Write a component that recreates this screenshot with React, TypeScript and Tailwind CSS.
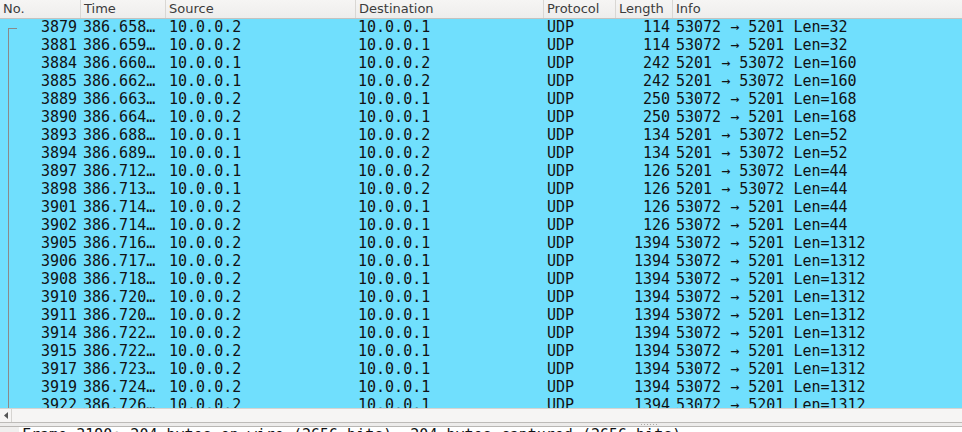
import React from "react";

type Row = {
  no: string;
  time: string;
  src: string;
  dst: string;
  len: string;
  info: string;
};

const UP = "53072 → 5201";
const DOWN = "5201 → 53072";

const rows: Row[] = [
  { no: "3879", time: "386.658…", src: "10.0.0.2", dst: "10.0.0.1", len: "114", info: `${UP} Len=32` },
  { no: "3881", time: "386.659…", src: "10.0.0.2", dst: "10.0.0.1", len: "114", info: `${UP} Len=32` },
  { no: "3884", time: "386.660…", src: "10.0.0.1", dst: "10.0.0.2", len: "242", info: `${DOWN} Len=160` },
  { no: "3885", time: "386.662…", src: "10.0.0.1", dst: "10.0.0.2", len: "242", info: `${DOWN} Len=160` },
  { no: "3889", time: "386.663…", src: "10.0.0.2", dst: "10.0.0.1", len: "250", info: `${UP} Len=168` },
  { no: "3890", time: "386.664…", src: "10.0.0.2", dst: "10.0.0.1", len: "250", info: `${UP} Len=168` },
  { no: "3893", time: "386.688…", src: "10.0.0.1", dst: "10.0.0.2", len: "134", info: `${DOWN} Len=52` },
  { no: "3894", time: "386.689…", src: "10.0.0.1", dst: "10.0.0.2", len: "134", info: `${DOWN} Len=52` },
  { no: "3897", time: "386.712…", src: "10.0.0.1", dst: "10.0.0.2", len: "126", info: `${DOWN} Len=44` },
  { no: "3898", time: "386.713…", src: "10.0.0.1", dst: "10.0.0.2", len: "126", info: `${DOWN} Len=44` },
  { no: "3901", time: "386.714…", src: "10.0.0.2", dst: "10.0.0.1", len: "126", info: `${UP} Len=44` },
  { no: "3902", time: "386.714…", src: "10.0.0.2", dst: "10.0.0.1", len: "126", info: `${UP} Len=44` },
  { no: "3905", time: "386.716…", src: "10.0.0.2", dst: "10.0.0.1", len: "1394", info: `${UP} Len=1312` },
  { no: "3906", time: "386.717…", src: "10.0.0.2", dst: "10.0.0.1", len: "1394", info: `${UP} Len=1312` },
  { no: "3908", time: "386.718…", src: "10.0.0.2", dst: "10.0.0.1", len: "1394", info: `${UP} Len=1312` },
  { no: "3910", time: "386.720…", src: "10.0.0.2", dst: "10.0.0.1", len: "1394", info: `${UP} Len=1312` },
  { no: "3911", time: "386.720…", src: "10.0.0.2", dst: "10.0.0.1", len: "1394", info: `${UP} Len=1312` },
  { no: "3914", time: "386.722…", src: "10.0.0.2", dst: "10.0.0.1", len: "1394", info: `${UP} Len=1312` },
  { no: "3915", time: "386.722…", src: "10.0.0.2", dst: "10.0.0.1", len: "1394", info: `${UP} Len=1312` },
  { no: "3917", time: "386.723…", src: "10.0.0.2", dst: "10.0.0.1", len: "1394", info: `${UP} Len=1312` },
  { no: "3919", time: "386.724…", src: "10.0.0.2", dst: "10.0.0.1", len: "1394", info: `${UP} Len=1312` },
  { no: "3922", time: "386.726…", src: "10.0.0.2", dst: "10.0.0.1", len: "1394", info: `${UP} Len=1312` },
];

function HeaderCell({ label, className }: { label: string; className: string }) {
  return (
    <div className={`h-full border-r border-[#d9d7d4] pl-[3px] ${className}`}>{label}</div>
  );
}

function PacketRow({ row, first }: { row: Row; first: boolean }) {
  return (
    <div className="flex h-[18px] shrink-0 leading-[16px] whitespace-pre">
      <div className="relative w-[81px] shrink-0 pr-[4px] text-right">
        {first ? (
          <span className="absolute left-[8px] top-[9px] bottom-0 w-[9px] border-l border-t border-[#8a8a8a]" />
        ) : (
          <span className="absolute left-[8px] top-0 bottom-0 border-l border-[#8a8a8a]" />
        )}
        {row.no}
      </div>
      <div className="w-[85px] shrink-0 pl-[2px]">{row.time}</div>
      <div className="w-[190px] shrink-0 pl-[3px]">{row.src}</div>
      <div className="w-[188px] shrink-0 pl-[2px]">{row.dst}</div>
      <div className="w-[72px] shrink-0 pl-[3px]">UDP</div>
      <div className="w-[57px] shrink-0 pr-[3px] text-right">{row.len}</div>
      <div className="flex-1 pl-[3px]">{row.info}</div>
    </div>
  );
}

export default function App() {
  return (
    <div className="flex h-[432px] w-[962px] flex-col overflow-hidden bg-[#edeceb]">
      {/* column header */}
      <div className="flex h-[19px] shrink-0 border-b border-[#c4c2bf] bg-gradient-to-b from-[#f6f5f4] to-[#eeedec] font-['DejaVu_Sans',sans-serif] text-[13px] leading-[18px] text-[#3c3c3c]">
        <HeaderCell label="No." className="w-[81px] shrink-0" />
        <HeaderCell label="Time" className="w-[85px] shrink-0" />
        <HeaderCell label="Source" className="w-[190px] shrink-0" />
        <HeaderCell label="Destination" className="w-[188px] shrink-0" />
        <HeaderCell label="Protocol" className="w-[72px] shrink-0" />
        <HeaderCell label="Length" className="w-[57px] shrink-0" />
        <div className="flex-1 pl-[3px]">Info</div>
      </div>

      {/* packet list */}
      <div className="flex h-[389px] shrink-0 flex-col overflow-hidden bg-[#70dffd] font-['DejaVu_Sans_Mono',monospace] text-[15px] text-[#111214]">
        {rows.map((r, i) => (
          <PacketRow key={r.no} row={r} first={i === 0} />
        ))}
      </div>

      {/* horizontal scrollbar */}
      <div className="flex h-[15px] shrink-0 items-stretch border-t border-[#d6d4d1] border-b border-b-[#bdbbb8] bg-[#f6f5f4]">
        <div className="flex w-[12px] items-center justify-center border-r border-[#d6d4d1]">
          <svg width="4" height="7" viewBox="0 0 4 7">
            <path d="M4 0 L0 3.5 L4 7 Z" fill="#555" />
          </svg>
        </div>
      </div>

      {/* splitter */}
      <div className="flex h-[4px] shrink-0 items-center justify-center border-b border-[#b9b7b4]">
        <div className="ml-[336px] flex gap-[2px]">
          {[0, 1, 2, 3, 4, 5].map((d) => (
            <span key={d} className="h-[1px] w-[1px] bg-[#a9a7a4]" />
          ))}
        </div>
      </div>

      {/* packet details */}
      <div className="flex flex-1 bg-[#f0efee]">
        <div className="flex-1 ml-[19px] bg-white pl-[3px] font-['DejaVu_Sans_Mono',monospace] text-[15px] leading-[17px] text-[#111214] whitespace-pre">
          Frame 3190: 204 bytes on wire (2656 bits), 204 bytes captured (2656 bits)
        </div>
      </div>
    </div>
  );
}
